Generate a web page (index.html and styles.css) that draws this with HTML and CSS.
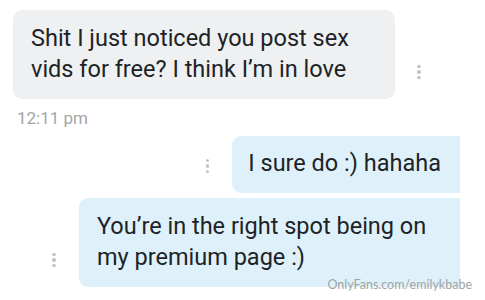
FILE: index.html
```html
<!DOCTYPE html>
<html>
<head>
<meta charset="utf-8">
<link rel="stylesheet" href="styles.css">
</head>
<body>
<div class="chat">
  <div class="row in">
    <div class="bubble grey">Shit I just noticed you post sex<br>vids for free? I think I’m in love</div>
    <div class="dots"><span></span><span></span><span></span></div>
  </div>
  <div class="time">12:11 pm</div>
  <div class="row out first">
    <div class="dots"><span></span><span></span><span></span></div>
    <div class="bubble blue">I sure do :) hahaha</div>
  </div>
  <div class="row out second">
    <div class="dots"><span></span><span></span><span></span></div>
    <div class="bubble blue wide">You’re in the right spot being on<br>my premium page :)</div>
  </div>
  <div class="watermark">OnlyFans.com/emilykbabe</div>
</div>
</body>
</html>
```
FILE: styles.css
```css
html, body {
  margin: 0;
  padding: 0;
  background: #ffffff;
}
.chat {
  position: relative;
  width: 485px;
  height: 300px;
  overflow: hidden;
  font-family: Roboto, "Noto Sans", sans-serif;
  color: #202326;
}
.row {
  display: flex;
  align-items: flex-end;
}
.row.in {
  padding: 10px 0 0 13px;
  gap: 22px;
}
.row.out {
  justify-content: flex-end;
  padding-right: 25px;
  gap: 23px;
}
.row.first { margin-top: 8px; }
.row.second { margin-top: 5px; }
.bubble {
  font-size: 23.5px;
  line-height: 31px;
  padding: 13px 18px 14px 18px;
  border-radius: 9px;
  white-space: nowrap;
}
.grey {
  background: #eff0f2;
  width: 346px;
}
.blue {
  background: #def1fa;
  padding: 12px 19px 14px 16px;
  border-top-right-radius: 0;
  border-bottom-right-radius: 0;
}
.blue.wide {
  width: 345px;
  padding: 13px 18px 14px 18px;
}
.dots {
  display: flex;
  flex-direction: column;
  gap: 2px;
  width: 4px;
  align-items: center;
  margin-bottom: 20px;
}
.dots span {
  width: 3.5px;
  height: 3.5px;
  border-radius: 50%;
  background: #c3c5c7;
}
.time {
  padding: 9px 0 0 17px;
  font-size: 17px;
  line-height: 20px;
  color: #a3a5a7;
}
.watermark {
  position: absolute;
  right: 13px;
  top: 277px;
  font-family: Lato, sans-serif;
  font-size: 12.5px;
  color: #a2a4a6;
}
```
